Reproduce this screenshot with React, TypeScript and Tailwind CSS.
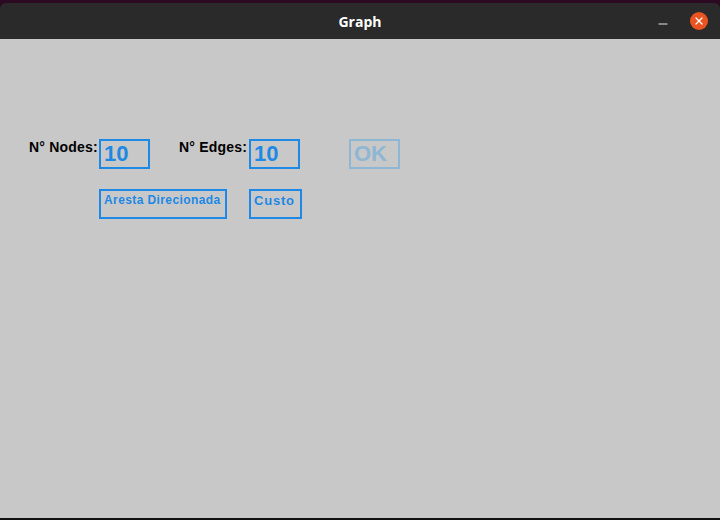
import {Minus, X} from "lucide-react";

const boxBase = "border-2 border-[#1e88e5] text-[#1e88e5] font-bold";

export default function App() {
    return (
        <div className="w-[720px] h-[520px] flex flex-col bg-[#2c0a22] overflow-hidden font-['Liberation_Sans',Arial,sans-serif]">
            {/* terminal behind the window */}
            <div className="h-[3px] flex-shrink-0" />

            {/* title bar */}
            <div className="h-[36px] flex-shrink-0 relative flex items-center justify-center bg-[#2a2a2a] rounded-t-[6px]">
                <span className="text-white font-bold text-[14px] font-['Open_Sans',sans-serif]">Graph</span>
                <div className="absolute right-[12px] top-0 h-full flex items-center gap-[20px]">
                    <Minus className="w-[14px] h-[14px] text-white mt-[5px]" strokeWidth={1.5} />
                    <div className="w-[18px] h-[18px] rounded-full bg-[#e95420] flex items-center justify-center">
                        <X className="w-[12px] h-[12px] text-white" strokeWidth={2.5} />
                    </div>
                </div>
            </div>

            {/* content */}
            <div className="flex-1 bg-[#c8c8c8] pt-[100px]">
                <div className="flex items-start">
                    <span className="ml-[29px] w-[70px] -mt-[2px] text-[14px] font-bold text-black tracking-[0.2px]">N° Nodes:</span>
                    <div className={`${boxBase} w-[51px] h-[30px] pl-[3px] text-[22px] leading-[26px]`}>10</div>
                    <span className="ml-[29px] w-[70px] -mt-[2px] text-[14px] font-bold text-black tracking-[0.2px]">N° Edges:</span>
                    <div className={`${boxBase} w-[51px] h-[30px] pl-[3px] text-[22px] leading-[26px]`}>10</div>
                    <div className="ml-[49px] w-[51px] h-[30px] border-2 border-[#8db7d4] text-[#8db7d4] font-bold pl-[3px] text-[22px] leading-[26px]">OK</div>
                </div>
                <div className="flex items-start mt-[20px] ml-[99px]">
                    <button className={`${boxBase} flex items-start w-[128px] h-[30px] pl-[3px] pt-[2px] text-[12px] tracking-[0.4px] leading-[14px]`}>
                        Aresta Direcionada
                    </button>
                    <button className={`${boxBase} flex items-start ml-[22px] w-[53px] h-[30px] pl-[3px] pt-[2px] text-[13px] tracking-[0.8px] leading-[15px]`}>
                        Custo
                    </button>
                </div>
            </div>

            <div className="h-[2px] flex-shrink-0 bg-[#111111]" />
        </div>
    );
}
